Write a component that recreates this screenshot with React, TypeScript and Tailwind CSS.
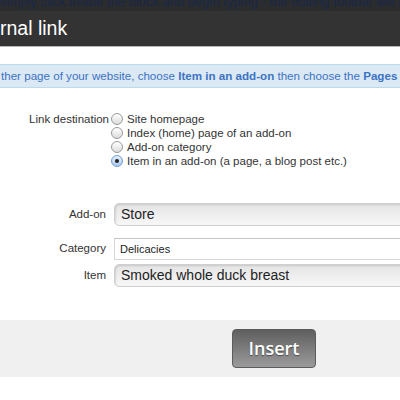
import React from 'react';

const font = { fontFamily: '"Liberation Sans", Arial, sans-serif' };

function Radio({ checked }: { checked?: boolean }) {
  return (
    <span
      className={`inline-flex items-center justify-center w-[12px] h-[12px] rounded-full border shrink-0 ${
        checked
          ? 'border-[#6f9ed6] bg-gradient-to-b from-[#e6f0fb] to-[#a9c9ee]'
          : 'border-[#9a9a9a] bg-gradient-to-b from-white to-[#dcdcdc]'
      }`}
    >
      {checked && <span className="w-[4px] h-[4px] rounded-full bg-[#222]" />}
    </span>
  );
}

const options = [
  { label: 'Site homepage' },
  { label: 'Index (home) page of an add-on' },
  { label: 'Add-on category' },
  { label: 'Item in an add-on (a page, a blog post etc.)', checked: true },
];

export default function App() {
  return (
    <div className="w-[400px] h-[400px] overflow-hidden bg-white relative" style={font}>
      {/* dimmed page behind */}
      <div className="h-[11px] bg-[#2b2c2e] overflow-hidden">
        <div className="mt-[-6px] text-[13px] leading-[16px] text-[#1a2848] whitespace-nowrap">
          simply click inside the block and begin typing - the editing toolbar will appear above
        </div>
      </div>

      {/* header */}
      <div className="h-[36px] bg-[#333333] border-b border-[#b5b5b5] flex items-center overflow-hidden">
        <span className="ml-[-39px] text-[19.5px] text-white whitespace-nowrap">External link</span>
      </div>

      {/* info bar */}
      <div className="mt-[17px] h-[24px] bg-[#dbe9f5] border-y border-[#bcdaee] flex items-center overflow-hidden">
        <span className="text-[11.6px] text-[#3c73c2] whitespace-nowrap ml-[1px]">
          ther page of your website, choose <b>Item in an add-on</b> then choose the <b>Pages</b> add-on
        </span>
      </div>

      {/* link destination */}
      <div className="mt-[24px] flex text-[11.5px] text-[#333]">
        <div className="w-[111px] text-right pr-[2px] leading-[14px]">Link destination</div>
        <div className="flex flex-col">
          {options.map((o) => (
            <label key={o.label} className="flex items-center gap-[4px] h-[14px] whitespace-nowrap">
              <Radio checked={o.checked} />
              <span className="leading-[14px]">{o.label}</span>
            </label>
          ))}
        </div>
      </div>

      {/* add-on */}
      <div className="mt-[35px] flex items-center text-[11.5px] text-[#333]">
        <div className="w-[110px] text-right pr-[4px]">Add-on</div>
        <div className="ml-[4px] h-[23px] flex-1 mr-[-20px] rounded-[5px] border border-[#cfcfcf] bg-gradient-to-b from-[#e4e4e4] to-[#f7f7f7] shadow-[inset_1px_1px_2px_rgba(0,0,0,0.12)] flex items-center pl-[6px] text-[14px] text-[#222]">
          Store
        </div>
      </div>

      {/* category */}
      <div className="mt-[12px] flex items-center text-[11.5px] text-[#333]">
        <div className="w-[110px] text-right pr-[4px]">Category</div>
        <div className="ml-[4px] h-[22px] flex-1 mr-[-20px] border border-[#d6d6d6] border-t-[#c4c4c4] bg-white flex items-center pl-[5px] text-[11px] text-[#222]">
          Delicacies
        </div>
      </div>

      {/* item */}
      <div className="mt-[4px] flex items-center text-[11.5px] text-[#333]">
        <div className="w-[110px] text-right pr-[4px]">Item</div>
        <div className="ml-[4px] h-[23px] flex-1 mr-[-20px] rounded-[5px] border border-[#cfcfcf] bg-gradient-to-b from-[#e4e4e4] to-[#f7f7f7] shadow-[inset_1px_1px_2px_rgba(0,0,0,0.12)] flex items-center pl-[6px] text-[14px] text-[#222]">
          Smoked whole duck breast
        </div>
      </div>

      {/* footer */}
      <div className="mt-[33px] h-[57px] bg-[#f0f0f0] flex items-center">
        <button
          className="ml-[232px] w-[84px] h-[39px] rounded-[4px] border border-[#5c5c5c] bg-gradient-to-b from-[#5f5f5f] to-[#9b9b9b] text-white text-[18px] font-semibold [text-shadow:0_1px_1px_rgba(0,0,0,0.45)]"
          style={{ fontFamily: '"Open Sans", "Liberation Sans", sans-serif' }}
        >
          Insert
        </button>
      </div>
    </div>
  );
}
